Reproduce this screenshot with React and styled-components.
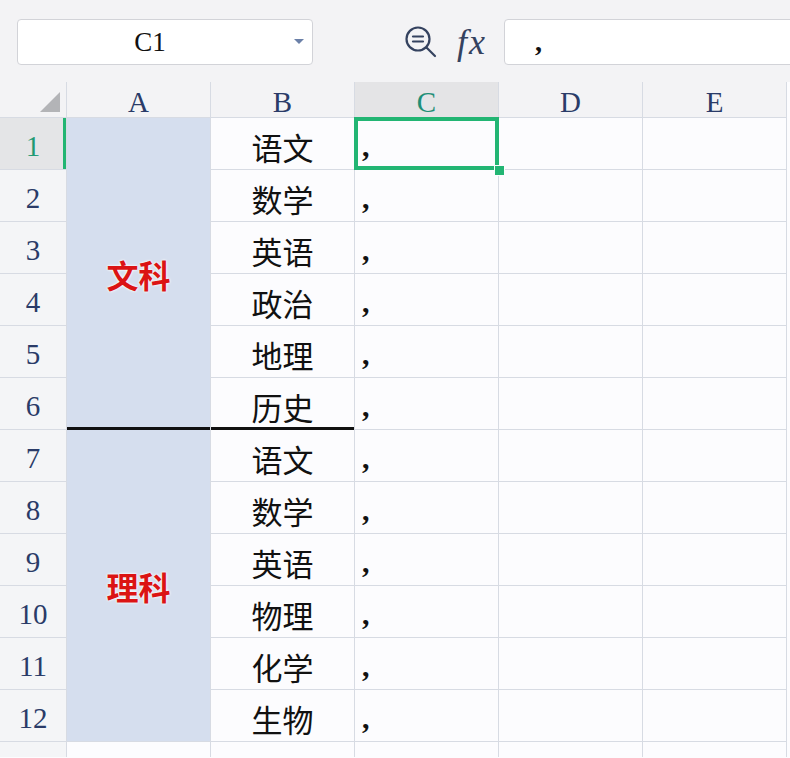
import React from 'react';
import styled, { createGlobalStyle } from 'styled-components';

const GlobalStyle = createGlobalStyle`
  html, body {
    margin: 0;
    padding: 0;
    background: #fcfcfe;
    font-family: "Noto Sans CJK SC", "Noto Sans", sans-serif;
  }
`;

const Page = styled.div`
  width: 790px;
  height: 758px;
  overflow: hidden;
`;

const Toolbar = styled.div`
  display: flex;
  align-items: center;
  height: 82px;
  padding-left: 17px;
  padding-top: 2px;
  background: #f3f3f5;
  box-sizing: border-box;
`;

const Box = styled.div`
  height: 46px;
  box-sizing: border-box;
  background: #fff;
  border: 1px solid #d2d3d8;
  border-radius: 4px;
  display: flex;
  align-items: center;
`;

const NameBox = styled(Box)`
  width: 296px;
  position: relative;
  justify-content: center;
  padding-right: 30px;
  font-family: "Liberation Serif", serif;
  font-size: 27px;
  color: #111;
`;

const Caret = styled.span`
  position: absolute;
  right: 8px;
  top: 19px;
  width: 0;
  height: 0;
  border-left: 5px solid transparent;
  border-right: 5px solid transparent;
  border-top: 5px solid #6b80a8;
`;

const IconGroup = styled.div`
  display: flex;
  align-items: center;
  margin-left: 91px;
  gap: 19px;
`;

const Fx = styled.span`
  font-family: "Liberation Serif", serif;
  font-style: italic;
  font-size: 36px;
  color: #34425f;
  letter-spacing: 2px;
`;

const FormulaBox = styled(Box)`
  flex: 1;
  margin-left: 17px;
  margin-right: -10px;
  padding-left: 30px;
  border-radius: 4px 0 0 4px;
`;

const Comma = styled.span`
  font-family: "Liberation Serif", serif;
  font-weight: 700;
  font-size: ${(p) => p.$size || 30}px;
  color: #111;
  line-height: 1;
`;

const Sheet = styled.div`
  display: grid;
  width: max-content;
  grid-template-columns: 66px repeat(5, 143px);
  grid-template-rows: 35px repeat(12, 51px) 15px;
  gap: 1px;
  background: #d7dbe3;
  padding-right: 1px;
`;

const Corner = styled.div`
  background: #f3f3f5;
  position: relative;
`;

const CornerMark = styled.span`
  position: absolute;
  right: 6px;
  bottom: 5px;
  width: 0;
  height: 0;
  border-left: 20px solid transparent;
  border-bottom: 20px solid #b3b4b7;
`;

const ColHead = styled.div`
  background: ${(p) => (p.$active ? '#e4e4e6' : '#f3f3f5')};
  color: ${(p) => (p.$active ? '#1f8f77' : '#2a3b68')};
  font-family: "Liberation Serif", serif;
  font-size: 29px;
  display: flex;
  align-items: center;
  justify-content: center;
  padding-top: 6px;
  box-sizing: border-box;
`;

const RowHead = styled.div`
  background: ${(p) => (p.$active ? '#e4e5e7' : '#f4f5f7')};
  color: ${(p) => (p.$active ? '#1f9a74' : '#2a3b68')};
  box-shadow: ${(p) => (p.$active ? 'inset -3px 0 0 #22b573' : 'none')};
  font-family: "Liberation Serif", serif;
  font-size: 29px;
  display: flex;
  align-items: center;
  justify-content: center;
  padding-top: 5px;
  box-sizing: border-box;
`;

const Cell = styled.div`
  background: #fcfcfe;
  display: flex;
  align-items: center;
  justify-content: ${(p) => (p.$left ? 'flex-start' : 'center')};
  padding-left: ${(p) => (p.$left ? '7px' : '0')};
  padding-top: 5px;
  box-sizing: border-box;
  font-size: 31px;
  color: #111;
  ${(p) =>
    p.$cut &&
    `position: relative; z-index: 1; box-shadow: inset 0 -2px 0 #111, 0 1px 0 #111;`}
  ${(p) =>
    p.$selected &&
    `position: relative; z-index: 2; box-shadow: 0 0 0 1px #22b573, inset 0 0 0 3px #22b573;`}
`;

const GroupCell = styled.div`
  grid-row: span 6;
  background: #d5deee;
  display: flex;
  align-items: center;
  justify-content: center;
  font-size: 32px;
  font-weight: 700;
  color: #db1414;
  text-shadow: 0 0 3px #fff, 0 0 2px #fff;
  ${(p) =>
    p.$cut &&
    `position: relative; z-index: 1; box-shadow: inset 0 -2px 0 #111, 0 1px 0 #111;`}
`;

const Handle = styled.span`
  position: absolute;
  right: -7px;
  bottom: -7px;
  width: 9px;
  height: 9px;
  background: #22b573;
  border: 1px solid #fcfcfe;
`;

function ZoomIcon() {
  return (
    <svg width="34" height="34" viewBox="0 0 34 34" fill="none" stroke="#34425f" strokeWidth="2.2" strokeLinecap="round">
      <circle cx="14" cy="14" r="11.5" />
      <line x1="9" y1="11.5" x2="19" y2="11.5" />
      <line x1="9" y1="16.5" x2="19" y2="16.5" />
      <line x1="22.5" y1="22.5" x2="31" y2="31" />
    </svg>
  );
}

const groups = [
  { name: '文科', subjects: ['语文', '数学', '英语', '政治', '地理', '历史'] },
  { name: '理科', subjects: ['语文', '数学', '英语', '物理', '化学', '生物'] },
];

const columns = ['A', 'B', 'C', 'D', 'E'];

export default function App() {
  const rows = [];
  groups.forEach((group, g) => {
    group.subjects.forEach((subject, i) => {
      const n = g * 6 + i + 1;
      const cut = g === 0 && i === 5;
      rows.push(<RowHead key={`h${n}`} $active={n === 1}>{n}</RowHead>);
      if (i === 0) {
        rows.push(
          <GroupCell key={`g${g}`} $cut={g === 0}>
            {group.name}
          </GroupCell>
        );
      }
      rows.push(<Cell key={`b${n}`} $cut={cut}>{subject}</Cell>);
      rows.push(
        <Cell key={`c${n}`} $left $selected={n === 1}>
          <Comma>,</Comma>
          {n === 1 && <Handle />}
        </Cell>
      );
      rows.push(<Cell key={`d${n}`} />);
      rows.push(<Cell key={`e${n}`} />);
    });
  });

  return (
    <Page>
      <GlobalStyle />
      <Toolbar>
        <NameBox>
          C1
          <Caret />
        </NameBox>
        <IconGroup>
          <ZoomIcon />
          <Fx>fx</Fx>
        </IconGroup>
        <FormulaBox>
          <Comma $size={28}>,</Comma>
        </FormulaBox>
      </Toolbar>
      <Sheet>
        <Corner>
          <CornerMark />
        </Corner>
        {columns.map((c) => (
          <ColHead key={c} $active={c === 'C'}>
            {c}
          </ColHead>
        ))}
        {rows}
        <RowHead />
        {columns.map((c) => (
          <Cell key={`z${c}`} />
        ))}
      </Sheet>
    </Page>
  );
}
